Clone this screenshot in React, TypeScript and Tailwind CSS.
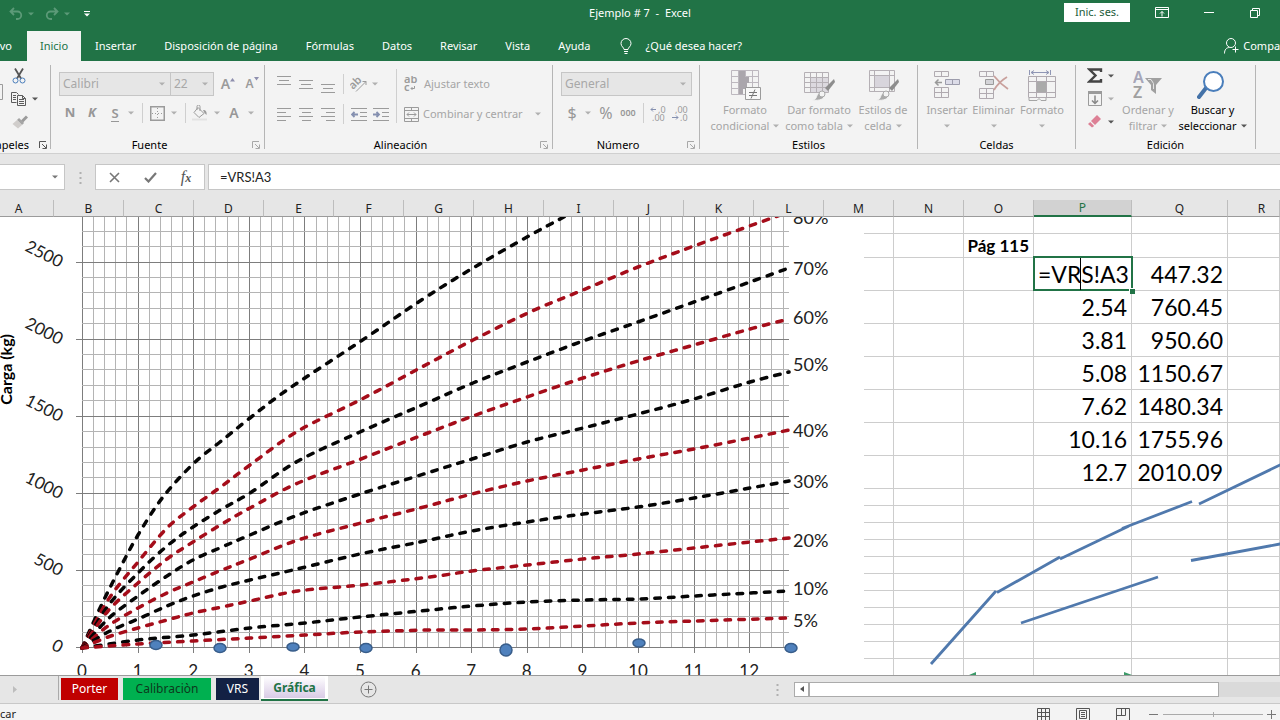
import React from "react";

type Kids = { children?: React.ReactNode };

const Arrow = ({ cls = "text-[#b0b0b0]" }: { cls?: string }) => (
  <svg className={`shrink-0 ${cls}`} width="6" height="4" viewBox="0 0 6 4" aria-hidden="true">
    <path d="M0 .5h6L3 3.5z" fill="currentColor" />
  </svg>
);

const Svg = ({ w, h, cls = "text-[#9b9b9b]", children }: Kids & { w: number; h: number; cls?: string }) => (
  <svg className={`shrink-0 ${cls}`} width={w} height={h} viewBox={`0 0 ${w} ${h}`} fill="none" stroke="currentColor" aria-hidden="true">
    {children}
  </svg>
);

const Btn = ({ w, label, children }: Kids & { w: string; label: string }) => (
  <button type="button" aria-label={label} className={`flex h-full shrink-0 items-center justify-center ${w}`}>
    {children}
  </button>
);

const Rule = () => <div className="h-5 w-px shrink-0 bg-[#cfcfcf]" />;

const Launcher = ({ cls = "text-[#a8a8a8]" }: { cls?: string }) => (
  <button type="button" aria-label="Más opciones" className="flex items-center">
    <Svg w={8} h={8} cls={cls}>
      <path d="M.5 7V.5H7M3 3l4 4M7.500 3.500v4h-4" />
    </Svg>
  </button>
);

function Group({ w, label, launcher, children }: Kids & { w: string; label: string; launcher?: boolean }) {
  return (
    <section aria-label={label} className={`flex shrink-0 ${w}`}>
      <div className="flex min-w-0 flex-1 flex-col">
        <div className="flex flex-1 flex-col">{children}</div>
        <div className="flex h-4 items-center">
          <span className="flex-1 text-center text-black">{label}</span>
          {launcher && <span className="flex w-4 justify-center"><Launcher /></span>}
        </div>
      </div>
      <div className="my-1 w-px bg-[#b5b5b5]" />
    </section>
  );
}

const Big = ({ w, icon, a, b, cls = "text-[#a5a5a5]", arrowCls }: { w: string; icon: React.ReactNode; a: string; b?: string; cls?: string; arrowCls?: string }) => (
  <button type="button" className={`flex shrink-0 flex-col items-center pt-[7px] leading-4 whitespace-nowrap ${w} ${cls}`}>
    <span className="flex h-[34px] items-center">{icon}</span>
    <span>{a}</span>
    <span className="flex h-4 items-center gap-1">
      {b}
      <Arrow cls={arrowCls} />
    </span>
  </button>
);

const lineSets = {
  top: ["M0 .5h14M2 4.500h10M0 8.500h14", 9],
  left: ["M0 .5h14M0 4.500h9M0 8.500h14M0 12.500h9", 13],
  center: ["M0 .5h14M3 4.500h9M0 8.500h14M3 12.500h9", 13],
  right: ["M0 .5h14M5 4.500h9M0 8.500h14M5 12.500h9", 13],
} as const;

const Lines = ({ kind }: { kind: keyof typeof lineSets }) => (
  <Svg w={14} h={lineSets[kind][1]}>
    <path d={lineSets[kind][0]} />
  </Svg>
);

const Brush = () => (
  <>
    <path d="M31 9L22 18l3 3 7-9z" fill="#8d8d8d" stroke="none" />
    <path d="M9 30c5 0 4-4 6-6s6-1 6 2-4 5-12 4z" fill="#a9a9a9" stroke="#f3f3f3" />
    <circle cx="19" cy="24" r="3" fill="#f3f3f3" stroke="#a9a9a9" />
  </>
);

function TitleBar() {
  return (
    <header className="flex h-[31px] shrink-0 items-center bg-[#217346] text-white">
      <div className="flex flex-1 basis-0 items-center self-stretch pb-1">
        <span className="w-1" />
        <Btn w="w-6" label="Deshacer">
          <Svg w={14} h={13} cls="text-[#5c9a78]">
            <path d="M5 1L1.500 4.500 5 8M2 4.500h6.500a3.700 3.700 0 0 1 0 7.500H7" strokeWidth="1.800" />
          </Svg>
        </Btn>
        <Arrow cls="text-[#5c9a78]" />
        <span className="w-1.5" />
        <Btn w="w-6" label="Rehacer">
          <Svg w={14} h={13} cls="text-[#5c9a78]">
            <path d="M9 1l3.500 3.500L9 8M12 4.500H5.500a3.700 3.700 0 0 0 0 7.500H7" strokeWidth="1.800" />
          </Svg>
        </Btn>
        <Arrow cls="text-[#5c9a78]" />
        <span className="w-[7px]" />
        <Btn w="w-5" label="Personalizar barra de acceso rápido">
          <Svg w={6} h={6} cls="text-white">
            <path d="M0 .5h6" />
            <path d="M0 2.500h6L3 5.500z" fill="currentColor" stroke="none" />
          </Svg>
        </Btn>
      </div>
      <h1 className="pb-1 whitespace-pre">Ejemplo # 7  -  Excel</h1>
      <div className="flex flex-1 basis-0 items-center justify-end self-stretch pb-1.5">
        <button type="button" className="mr-1.5 flex h-[19px] w-[66px] items-center justify-center bg-white text-[#1d5c3a]">
          Inic. ses.
        </button>
        <Btn w="w-[52px]" label="Opciones de la cinta">
          <Svg w={14} h={11} cls="text-white">
            <path d="M.5.5h13v10H.5zM.5 2.500h13M7 9.500V4.500M5 6.500l2-2 2 2" />
          </Svg>
        </Btn>
        <Btn w="w-[42px]" label="Minimizar">
          <Svg w={10} h={1} cls="text-white"><path d="M0 .5h10" /></Svg>
        </Btn>
        <Btn w="w-[50px]" label="Restaurar">
          <Svg w={10} h={10} cls="text-white"><path d="M.5 2.500h7v7h-7zM2.500 2V.5h7v7H8" /></Svg>
        </Btn>
      </div>
    </header>
  );
}

const menu = ["Insertar", "Disposición de página", "Fórmulas", "Datos", "Revisar", "Vista", "Ayuda"];

function Tabs() {
  return (
    <nav className="flex h-[30px] shrink-0 items-stretch overflow-hidden bg-[#217346] whitespace-nowrap text-white">
      <a href="#archivo" className="flex w-[27px] items-center justify-end pr-[15px]">Archivo</a>
      <a href="#inicio" className="flex w-[54px] items-center justify-center bg-[#f3f3f3] text-[#217346]">Inicio</a>
      <div className="flex items-center gap-7 pl-3.5">
        {menu.map((m) => <a key={m} href={`#${m}`}>{m}</a>)}
      </div>
      <button type="button" className="flex items-center gap-3.5 pl-[29px]">
        <Svg w={12} h={16} cls="text-white">
          <path d="M4 11.500c0-2-3-3-3-6a5 5 0 0 1 10 0c0 3-3 4-3 6zM4 13.500h4M4.500 15.500h3" />
        </Svg>
        ¿Qué desea hacer?
      </button>
      <button type="button" className="-mr-4 ml-auto flex items-center gap-1">
        <Svg w={15} h={16} cls="text-white">
          <circle cx="7" cy="5" r="4.500" />
          <path d="M.5 15.500c0-4 2-6 5-6M11.500 8.500v6M8.500 11.500h6" />
        </Svg>
        Compartir
      </button>
    </nav>
  );
}

const Combo = ({ w, value, label }: { w: string; value: string; label: string }) => (
  <div className={`relative flex h-6 shrink-0 items-center text-[12px] ${w}`}>
    <select aria-label={label} disabled defaultValue={value} className="h-full w-full appearance-none border border-[#c6c6c6] bg-[#e6e6e6] pl-[3px] text-[#a8a8a8] opacity-100">
      <option>{value}</option>
    </select>
    <span className="pointer-events-none absolute right-1.5"><Arrow /></span>
  </div>
);

function Ribbon() {
  return (
    <div className="flex h-[93px] shrink-0 overflow-hidden border-b border-[#d0d0d0] bg-[#f3f3f3]">
      <section aria-label="Portapapeles" className="flex w-[51px] shrink-0">
        <div className="flex min-w-0 flex-1 flex-col overflow-hidden pt-[3px]">
          <div className="flex flex-1">
            <div className="w-2 shrink-0 overflow-hidden pt-5">
              <Svg w={3} h={16}><path d="M0 .5h2.500v15H0" /></Svg>
            </div>
            <div className="flex flex-col">
              <div className="flex h-[23px]">
                <Btn w="w-[21px]" label="Cortar">
                  <Svg w={14} h={16} cls="text-[#555]">
                    <path d="M3 .5l6 10M11 .5L5 10.500" strokeWidth="1.800" />
                    <circle cx="3.500" cy="12.500" r="2.500" stroke="#4a7ebb" />
                    <circle cx="10.500" cy="12.500" r="2.500" stroke="#4a7ebb" />
                  </Svg>
                </Btn>
              </div>
              <div className="flex h-[23px] items-center">
                <Btn w="w-[21px]" label="Copiar">
                  <Svg w={15} h={14} cls="text-[#5c5c5c]">
                    <path d="M5.500 10.500h-5V.5h5l2 2M2 3.500h3M2 5.500h3M2 7.500h3" />
                    <path d="M6.500 3.500h5l3 3v7h-8zM8 7.500h5M8 9.500h5M8 11.500h5M11.500 3.500v3h3" fill="#f3f3f3" />
                  </Svg>
                </Btn>
                <span className="w-[3px]" />
                <Arrow cls="text-[#555]" />
              </div>
              <div className="flex h-[23px]">
                <Btn w="w-[23px]" label="Copiar formato">
                  <Svg w={16} h={14}>
                    <path d="M15 1.500L10 6.500" strokeWidth="3" />
                    <path d="M6 4l5 5" strokeWidth="3" stroke="#a5a5a5" />
                    <path d="M5 5l5 5-4 3.500L.5 9z" fill="#d0cdcb" stroke="none" />
                  </Svg>
                </Btn>
              </div>
            </div>
          </div>
          <div className="flex h-4 items-center justify-end gap-[10px] pr-[3px]">
            <span className="text-black">Portapapeles</span>
            <Launcher cls="text-[#555]" />
          </div>
        </div>
        <div className="my-1 w-px bg-[#b5b5b5]" />
      </section>

      <Group w="w-[214px]" label="Fuente" launcher>
        <div className="flex items-center pt-[11px] pl-2">
          <Combo w="w-28" value="Calibri" label="Fuente" />
          <Combo w="-ml-px w-11" value="22" label="Tamaño de fuente" />
          <button type="button" aria-label="Aumentar tamaño" className="flex w-6 justify-center pl-1 text-sm font-semibold text-[#9b9b9b]">
            A<Svg w={5} h={8}><path d="M0 7.500h5L2.500 4z" fill="#8e8fae" stroke="none" /></Svg>
          </button>
          <button type="button" aria-label="Reducir tamaño" className="flex w-6 justify-center pl-1 text-[12px] font-semibold text-[#9b9b9b]">
            A<Svg w={5} h={8}><path d="M0 2h5L2.500 5.500z" fill="#8e8fae" stroke="none" /></Svg>
          </button>
        </div>
        <div className="flex h-[30px] items-center pt-1 pl-2 text-[13px] font-bold text-[#979797]">
          <Btn w="w-[22px]" label="Negrita">N</Btn>
          <Btn w="w-[22px]" label="Cursiva"><i>K</i></Btn>
          <Btn w="w-6" label="Subrayado"><span className="border-b border-[#979797] leading-4 font-semibold">S</span></Btn>
          <Btn w="w-2" label="Opciones de subrayado"><Arrow /></Btn>
          <span className="w-[7px]" />
          <Rule />
          <Btn w="w-7" label="Bordes">
            <Svg w={15} h={15}><path d="M.5.5h14v14H.5z" strokeWidth="2" /><path d="M7.500 2v12M2 7.500h12" strokeDasharray="1 2" /></Svg>
          </Btn>
          <Arrow />
          <span className="w-2" />
          <Rule />
          <Btn w="w-7" label="Color de relleno">
            <Svg w={16} h={16}>
              <path d="M6 2.500l6 6-5 4-5-5zM5 5V1.500a1.500 1.500 0 0 1 3 0V6" />
              <path d="M11 5c3 0 4 2 3.500 5l-2-2z" fill="#9b9b9b" stroke="none" />
              <path d="M0 14.500h15" stroke="#e2e2e2" strokeWidth="2" />
            </Svg>
          </Btn>
          <Arrow />
          <Btn w="w-7" label="Color de fuente"><span className="text-sm font-semibold">A</span></Btn>
          <Arrow />
        </div>
      </Group>

      <Group w="w-72" label="Alineación" launcher>
        <div className="flex pt-2 pl-2">
          <div className="flex flex-col">
            <div className="flex h-[30px] items-center">
              <Btn w="w-[22px]" label="Arriba"><span className="pb-2"><Lines kind="top" /></span></Btn>
              <Btn w="w-[22px]" label="Medio"><Lines kind="top" /></Btn>
              <Btn w="w-[22px]" label="Abajo"><span className="pt-2"><Lines kind="top" /></span></Btn>
              <span className="w-1" />
              <Rule />
              <Btn w="w-7" label="Orientación">
                <Svg w={17} h={16}>
                  <text x="0" y="11" fontSize="11" fontWeight="600" fill="currentColor" stroke="none" transform="rotate(-45 5 9)">ab</text>
                  <path d="M6 15.500L16 5.500M12.500 5.500H16v3.500" />
                </Svg>
              </Btn>
              <Arrow />
            </div>
            <div className="flex h-[30px] items-center">
              <Btn w="w-[22px]" label="Izquierda"><Lines kind="left" /></Btn>
              <Btn w="w-[22px]" label="Centro"><Lines kind="center" /></Btn>
              <Btn w="w-[22px]" label="Derecha"><Lines kind="right" /></Btn>
              <span className="w-1" />
              <Rule />
              <Btn w="w-[30px]" label="Disminuir sangría">
                <Svg w={16} h={13}><path d="M0 .5h16M9 4.500h7M9 8.500h7M0 12.500h16" /><path d="M7 6.500H1M3.500 4L1 6.500 3.500 9" stroke="#8590b0" strokeWidth="1.800" /></Svg>
              </Btn>
              <Btn w="w-3.5" label="Aumentar sangría">
                <Svg w={16} h={13}><path d="M0 .5h16M9 4.500h7M9 8.500h7M0 12.500h16" /><path d="M0 6.500h6M3.500 4L6 6.500 3.500 9" stroke="#8590b0" strokeWidth="1.800" /></Svg>
              </Btn>
            </div>
          </div>
          <div className="ml-2 h-[54px] w-px bg-[#cfcfcf]" />
          <div className="flex flex-col pl-[7px] text-[#a5a5a5]">
            <button type="button" className="flex h-[30px] items-center gap-1.5 whitespace-nowrap">
              <Svg w={14} h={16}>
                <text x="0" y="7" fontSize="11" fontWeight="600" fill="currentColor" stroke="none">ab</text>
                <text x="0" y="15" fontSize="11" fontWeight="600" fill="currentColor" stroke="none">c</text>
                <path d="M10.500 10v2.500H7M8.500 11L7 12.500 8.500 14" />
              </Svg>
              Ajustar texto
            </button>
            <button type="button" className="flex h-[30px] items-center gap-1 whitespace-nowrap">
              <Svg w={15} h={15}>
                <path d="M.5.5h14v14H.5zM.5 3.500h14M.5 11.500h14M7.500.5v3M7.500 11.500v3M3 7.500h9M5 5.500l-2 2 2 2M10 5.500l2 2-2 2" />
              </Svg>
              Combinar y centrar
              <span className="w-1" />
              <Arrow />
            </button>
          </div>
        </div>
      </Group>

      <Group w="w-[147px]" label="Número" launcher>
        <div className="flex pt-[11px] pl-2">
          <Combo w="w-[131px]" value="General" label="Formato de número" />
        </div>
        <div className="flex h-[30px] items-center pt-1 pl-1.5 text-[#979797]">
          <Btn w="w-[26px]" label="Moneda"><span className="text-base">$</span></Btn>
          <Arrow />
          <Btn w="w-[30px]" label="Porcentaje"><span className="text-base">%</span></Btn>
          <Btn w="w-3.5" label="Millares"><span className="text-[9px] font-semibold">000</span></Btn>
          <span className="w-2" />
          <Rule />
          <Btn w="w-7" label="Aumentar decimales">
            <Svg w={16} h={15}>
              <path d="M6 3.500H1M3 1.500l-2 2 2 2" stroke="#8590b0" />
              <text x="8" y="7" fontSize="9" fill="currentColor" stroke="none">,0</text>
              <text x="2" y="15" fontSize="9" fill="currentColor" stroke="none">,00</text>
            </Svg>
          </Btn>
          <Btn w="w-4" label="Disminuir decimales">
            <Svg w={16} h={15}>
              <path d="M0 11.500h6M4 9.500l2 2-2 2" stroke="#8590b0" />
              <text x="3" y="7" fontSize="9" fill="currentColor" stroke="none">,00</text>
              <text x="8" y="15" fontSize="9" fill="currentColor" stroke="none">,0</text>
            </Svg>
          </Btn>
        </div>
      </Group>

      <Group w="w-[218px]" label="Estilos">
        <div className="flex pl-2">
          <Big w="w-[74px]" a="Formato" b="condicional" icon={
            <Svg w={32} h={31}>
              <path d="M2.500.5h27v24h-27zM2.500 6.500h27M2.500 12.500h27M2.500 18.500h27M9.500.5v24M16.500.5v24M23.500.5v24" stroke="#bdb8bf" />
              <path d="M10 1h6v6h-6zM10 7h10v6H10zM10 13h8v6h-8zM10 19h4v5h-4z" fill="#aaa6ac" stroke="none" />
              <path d="M16.500 17.500h15v12h-15z" fill="#f8f8f8" />
              <path d="M20 22.500h8M20 25.500h8M26 19.500l-4 9" stroke="#777" />
            </Svg>
          } />
          <Big w="w-[74px]" a="Dar formato" b="como tabla" icon={
            <Svg w={32} h={31}>
              <path d="M8 8h17v14H8z" fill="#dcd9df" stroke="none" />
              <path d="M1.500 2.500h24v20h-24zM1.500 7.500h24M1.500 12.500h24M1.500 17.500h24M7.500 2.500v20M13.500 2.500v20M19.500 2.500v20" stroke="#b5b0b5" />
              <Brush />
            </Svg>
          } />
          <Big w="w-[54px]" a="Estilos de" b="celda" icon={
            <Svg w={32} h={31}>
              <path d="M7 6h15v11H7z" fill="#d8d5dc" stroke="none" />
              <path d="M2.500.5h25v21h-25zM2.500 5.500h25M2.500 17.500h25M7.500.5v21M22.500.5v21" stroke="#b5b0b5" />
              <Brush />
            </Svg>
          } />
        </div>
      </Group>

      <Group w="w-[158px]" label="Celdas">
        <div className="flex pl-1.5">
          <Big w="w-[46px]" a="Insertar" icon={
            <Svg w={27} h={28}>
              <path d="M.5.5h14v5H.5zM7.500.5v5M.5 16.500h14v10H.5zM.5 21.500h14M7.500 16.500v10" stroke="#b0aab0" />
              <path d="M11.500 8.500h14v5h-14zM18.500 8.500v5" fill="#dcdce8" stroke="#9c9cac" />
              <path d="M8 11.500H2M4.500 8.500l-3 3 3 3" stroke="#999" strokeWidth="1.500" />
            </Svg>
          } />
          <Big w="w-[47px]" a="Eliminar" icon={
            <Svg w={30} h={28}>
              <path d="M.5.500h14v5H.5zM7.500.5v5M.5 17.500h14v10H.5zM.5 22.500h14M7.500 17.500v10" stroke="#b0aab0" />
              <path d="M6.500 8.500h8v5h-8z" fill="#d4d4d8" stroke="#9a9a9a" />
              <path d="M15 5c4 5 8 9 14 13M28 6c-5 3-10 8-13 13" stroke="#c9a09c" strokeWidth="1.800" />
            </Svg>
          } />
          <Big w="w-[50px]" a="Formato" icon={
            <Svg w={28} h={31}>
              <path d="M1.500 0v5M22.500 0v5M3 2.500h18M6 .5l-3 2 3 2M18 .5l3 2-3 2" stroke="#9097b5" />
              <path d="M.5 6.500h27v21H.5zM.5 11.500h27M.5 22.500h27M8.500 6.500v21M18.500 6.500v21" stroke="#b0aab0" />
              <path d="M9 12h9v10H9z" fill="#aaa" stroke="none" />
              <path d="M1 28v2.500h8l2-2 2 2h5V28" stroke="#a5a5a5" />
            </Svg>
          } />
        </div>
      </Group>

      <Group w="w-[180px]" label="Edición">
        <div className="flex pl-1.5">
          <div className="flex w-9 flex-col pt-[3px]">
            <div className="flex h-[23px] items-center">
              <Btn w="w-[26px]" label="Autosuma">
                <Svg w={16} h={15} cls="text-[#444]"><path d="M14 4V1.500H2.500L8.500 7.500l-6 6H14v-2.500" strokeWidth="2.400" /></Svg>
              </Btn>
              <Arrow cls="text-[#555]" />
            </div>
            <div className="flex h-[23px] items-center">
              <Btn w="w-[26px]" label="Rellenar">
                <Svg w={14} h={15}><path d="M.5.5h13v14H.5z" /><path d="M0 1.500h14" strokeWidth="3" /><path d="M7 4.500v8M4 9.500l3 3 3-3" stroke="#888" strokeWidth="1.500" /></Svg>
              </Btn>
              <Arrow />
            </div>
            <div className="flex h-[23px] items-center">
              <Btn w="w-[26px]" label="Borrar">
                <Svg w={14} h={13}>
                  <path d="M9 0l4 4-6 6-4-4z" fill="#dd8095" stroke="none" />
                  <path d="M2.200 7l4 4L4 12.500 0 9z" fill="#dd8095" stroke="none" />
                </Svg>
              </Btn>
              <Arrow cls="text-[#555]" />
            </div>
          </div>
          <Big w="w-[60px]" a="Ordenar y" b="filtrar" icon={
            <Svg w={30} h={30}>
              <text x="0" y="13" fontSize="16" fontWeight="600" fill="#a7a6b8" stroke="none">A</text>
              <text x="0" y="28" fontSize="16" fontWeight="600" fill="#a0a0a0" stroke="none">Z</text>
              <path d="M12 8h17l-6 7v9l-5-4v-5z" fill="#a0a0a0" stroke="none" />
              <path d="M15 9.500h3l2.500 4V19" stroke="#e6e6e6" />
            </Svg>
          } />
          <Big w="w-[69px]" a="Buscar y" b="seleccionar" cls="text-black" arrowCls="text-[#555]" icon={
            <Svg w={31} h={29}>
              <path d="M9 17L2 26" stroke="#4472a8" strokeWidth="4" strokeLinecap="round" />
              <circle cx="16.500" cy="10.500" r="9.500" fill="#fff" stroke="#4a7ebb" strokeWidth="2" />
            </Svg>
          } />
        </div>
      </Group>
    </div>
  );
}

const Dots = () => (
  <Svg w={3} h={13}><path d="M1.500 1v2M1.500 6v2M1.500 11v2" strokeWidth="2" stroke="#b0b0b0" /></Svg>
);

function FormulaBar() {
  return (
    <div className="flex shrink-0 items-stretch bg-[#e6e6e6] py-[10px]">
      <button type="button" aria-label="Cuadro de nombres" className="flex h-[26px] w-[65px] items-center justify-end border border-l-0 border-[#c6c6c6] bg-white pr-1.5">
        <Arrow cls="text-[#777]" />
      </button>
      <span className="flex w-[30px] items-center justify-center"><Dots /></span>
      <div className="flex w-[110px] border border-[#c6c6c6] bg-white">
        <Btn w="w-9" label="Cancelar"><Svg w={11} h={11} cls="text-[#777]"><path d="M1 1l9 9M10 1l-9 9" strokeWidth="1.600" /></Svg></Btn>
        <Btn w="w-9" label="Introducir"><Svg w={13} h={11} cls="text-[#777]"><path d="M1 6l3.500 3.500L12 1" strokeWidth="2.200" /></Svg></Btn>
        <Btn w="w-9" label="Insertar función"><span className="font-['Liberation_Serif',serif] text-base leading-4 text-[#555] italic">f<span className="text-xs font-bold">x</span></span></Btn>
      </div>
      <input aria-label="Barra de fórmulas" defaultValue="=VRS!A3" className="ml-[3px] min-w-0 flex-1 border border-r-0 border-[#c6c6c6] bg-white pt-px pl-[11px] font-[Lato,sans-serif] text-[13px] text-[#222] outline-none" />
    </div>
  );
}

const R = "#a50d1a";
const K = "#050505";
const curves: { c: string; p: string }[] = [
  { c: K, p: "82,648 100,608 118,572 138,535 163,497 193,464 220,442 250,418 287,390 361,341 423,299 473,268 527,237 562,218 590,203" },
  { c: R, p: "82,648 108,600 138,562 167,528 193,507 222,486 250,465 298,431 360,400 420,368 473,340 530,312 583,290 638,267 694,246 772,218 789,212" },
  { c: K, p: "82,648 108,606 138,573 167,546 193,527 222,509 250,493 298,461 360,432 420,406 473,383 527,362 583,341 638,322 694,302 750,282 789,268" },
  { c: R, p: "82,648 108,611 138,583 167,559 193,542 222,524 250,508 298,483 361,459 420,436 473,416 527,397 583,378 638,361 694,345 750,329 789,319" },
  { c: K, p: "82,648 108,619 138,596 167,576 193,560 222,547 250,535 298,515 360,494 427,473 472,459 527,442 583,428 638,414 694,399 750,382 789,372" },
  { c: R, p: "82,648 108,626 138,608 167,593 193,582 222,570 250,559 298,540 361,523 420,508 472,494 527,481 583,470 638,459 694,449 750,438 789,430" },
  { c: K, p: "82,648 108,632 138,619 167,606 193,596 222,587 250,580 293,570 360,554 420,542 472,531 527,522 583,514 638,507 694,498 750,488 789,481" },
  { c: R, p: "82,648 108,637 138,628 167,620 193,613 222,607 250,601 298,591 361,585 430,577 472,571 527,565 583,559 638,554 694,548 750,542 789,538" },
  { c: K, p: "82,648 138,640 193,635 250,628 305,623 360,617 430,610 472,606 527,602 583,600 638,599 694,596 750,593 789,591" },
  { c: R, p: "82,648 138,644 193,641 250,638 305,635 361,632 430,630 472,630 527,629 583,626 638,623 694,621 789,618" },
];

// Turns a list of points into a smooth Catmull-Rom spline path.
function spline(list: string) {
  const p = list.split(" ").map((s) => s.split(",").map(Number));
  let d = `M${p[0][0]} ${p[0][1]}`;
  for (let i = 0; i < p.length - 1; i++) {
    const a = p[i - 1] ?? p[i];
    const b = p[i];
    const c = p[i + 1];
    const e = p[i + 2] ?? c;
    d += `C${b[0] + (c[0] - a[0]) / 6} ${b[1] + (c[1] - a[1]) / 6} ${c[0] - (e[0] - b[0]) / 6} ${c[1] - (e[1] - b[1]) / 6} ${c[0]} ${c[1]}`;
  }
  return d;
}

const percents: [string, number][] = [
  ["80%", 224], ["70%", 275], ["60%", 324], ["50%", 371], ["40%", 437], ["30%", 488], ["20%", 547], ["10%", 595], ["5%", 627],
];
const dots: number[][] = [
  [156, 645, 4.5], [220, 648, 4.5], [293, 647, 4], [366, 648, 4.5], [506, 650, 6], [639, 643, 4], [791, 648, 4.5],
];
const range = (n: number) => Array.from({ length: n }, (_, i) => i);

function Chart() {
  return (
    <svg className="absolute top-[17px] left-0 bg-white" width="864" height="458" viewBox="0 217 864 458" fontFamily="Lato, sans-serif" role="img" aria-label="Carga (kg)">
      {range(64).map((i) => {
        const x = Math.round(82 + i * 11.12) + 0.5;
        const major = i % 5 === 0;
        return <path key={i} d={`M${x} 217V${major ? 653 : 648}`} stroke={major ? "#7d7d7d" : "#b4b4b4"} />;
      })}
      {range(28).map((i) => {
        const y = Math.round(647 - i * 15.42) + 0.5;
        const major = i % 5 === 0;
        return <path key={i} d={`M${major ? 76 : 82} ${y}H789`} stroke={major ? "#7d7d7d" : "#b4b4b4"} />;
      })}
      {curves.map((l, i) => (
        <path key={i} d={spline(l.p)} fill="none" stroke={l.c} strokeWidth="3.500" strokeLinecap="round" strokeDasharray="5.500 8.200" />
      ))}
      {dots.map(([x, y, r]) => (
        <ellipse key={x} cx={x} cy={y} rx="6" ry={r} fill="#4f81bd" stroke="#385d8a" strokeWidth="1.500" />
      ))}
      {percents.map(([t, y]) => <text key={t} x="793" y={y} fontSize="18" fill="#222">{t}</text>)}
      {range(13).map((i) => <text key={i} x={82 + i * 55.6} y="677" fontSize="17" textAnchor="middle" fill="#222">{i}</text>)}
      {range(6).map((i) => {
        const y = 654 - i * 77.1;
        return <text key={i} x="61" y={y} fontSize="17" textAnchor="end" fill="#222" transform={`rotate(27 61 ${y - 4})`}>{i * 500}</text>;
      })}
      <text x="12" y="334" fontSize="16" fontWeight="700" textAnchor="end" transform="rotate(-90 12 334)">Carga (kg)</text>
    </svg>
  );
}

const cols = ["A", "B", "C", "D", "E", "F", "G", "H", "I", "J", "K", "L", "M", "N", "O", "P", "Q", "R"];
const colW: Record<string, string> = { A: "w-[54px]", P: "w-[98px]", Q: "w-24", R: "" };
const data = [
  ["=VRS!A3", "447.32"], ["2.54", "760.45"], ["3.81", "950.60"], ["5.08", "1150.67"],
  ["7.62", "1480.34"], ["10.16", "1755.96"], ["12.7", "2010.09"],
];

function Row({ h, cells = {} }: { h: string; cells?: Record<string, React.ReactNode> }) {
  return (
    <tr className={h}>
      {cols.map((c) => (
        <td key={c} className="border-r border-b border-[#cdcdcd] p-0 text-right whitespace-nowrap">{cells[c]}</td>
      ))}
    </tr>
  );
}

function Sheet() {
  return (
    <main className="relative min-h-[475px] flex-1 shrink-0 overflow-hidden bg-white font-[Lato,sans-serif] text-black">
      <table className="w-full table-fixed border-separate border-spacing-0">
        <colgroup>
          {cols.map((c) => <col key={c} className={colW[c] ?? "w-[70px]"} />)}
        </colgroup>
        <thead>
          <tr className="h-[17px]">
            {cols.map((c) => (
              <th key={c} scope="col" className={`border-r border-b border-r-[#bdbdbd] p-0 font-['Noto_Sans',sans-serif] text-[12px] leading-[15px] font-normal ${c === "P" ? "border-b-2 border-b-[#217346] bg-[#d2d2d2] text-[#217346]" : "border-b-[#9b9b9b] bg-[#e6e6e6] text-[#222]"} ${c === "A" ? "pr-4" : ""} ${c === "R" ? "pl-4" : ""}`}>
                {c}
              </th>
            ))}
          </tr>
        </thead>
        <tbody>
          <Row h="h-[17px]" />
          <Row h="h-6" cells={{ O: <div className="pr-1 text-[17px] leading-[23px] font-bold">Pág 115</div> }} />
          {data.map(([p, q], i) => (
            <Row
              key={q}
              h="h-[33px]"
              cells={{
                P: i === 0 ? (
                  <div className="relative h-8">
                    <input aria-label="Celda P3" defaultValue={p} className="absolute -top-0.5 -left-px h-[35px] w-[100px] border-2 border-[#217346] bg-white px-[3px] text-right text-[23px] outline-none" />
                    <span className="absolute top-0 left-[46px] h-8 w-px bg-black" />
                    <span className="absolute -right-1 -bottom-1 size-[6px] border-t border-l border-white bg-[#217346]" />
                  </div>
                ) : <div className="pr-1 text-[23px] leading-8">{p}</div>,
                Q: <div className="pr-1 text-[23px] leading-8">{q}</div>,
              }}
            />
          ))}
          {range(11).map((i) => <Row key={i} h="h-[17px]" />)}
        </tbody>
      </table>
      <Chart />
      <svg className="absolute top-[17px] left-[864px]" width="600" height="458" viewBox="864 217 600 458" fill="none" stroke="#5079ad" strokeWidth="2.800" aria-hidden="true">
        <path d="M931 664L996 591M997 592.500L1060 557M1060 559L1129 526M1122 528.500L1192 501.500M1199 504L1280 465L1360 427M1021 623L1158 577M1191 560.500L1280 544L1360 529" />
        <path d="M969 675l7-3v3zM1124 672l8 3h-8z" fill="#3a9a68" stroke="none" />
      </svg>
    </main>
  );
}

function SheetTabs() {
  return (
    <div className="flex h-7 shrink-0 items-start border-t border-[#9b9b9b] bg-[#e6e6e6] text-[12px]">
      <span className="flex h-[26px] w-[58px] items-center pl-[13px]">
        <Svg w={4} h={7}><path d="M0 0l4 3.500L0 7z" fill="#bdbdbd" stroke="none" /></Svg>
      </span>
      <div className="flex h-6 gap-[5px] border-l border-[#aaa] pt-0.5 pl-0.5">
        <button type="button" className="h-[22px] w-[57px] bg-[#c00000] text-white">Porter</button>
        <button type="button" className="h-[22px] w-[88px] bg-[#00b050] text-[#0d3a1d]">Calibraciòn</button>
        <button type="button" className="h-[22px] w-[43px] bg-[#132144] text-white">VRS</button>
      </div>
      <div className="ml-0.5 h-[25px] w-[67px] border-b-2 border-[#217346] bg-white px-[3px] pb-px">
        <button type="button" className="flex h-[22px] w-full items-center justify-center bg-linear-to-b from-white to-[#d9cbe6] pt-0.5 font-bold text-[#217346]">Gráfica</button>
      </div>
      <button type="button" aria-label="Hoja nueva" className="ml-8 flex h-[26px] items-center">
        <Svg w={17} h={17} cls="text-[#777]"><circle cx="8.500" cy="8.500" r="7.500" /><path d="M8.500 4.500v8M4.500 8.500h8" /></Svg>
      </button>
      <div className="ml-auto flex h-[26px] w-[504px] items-center">
        <Dots />
        <button type="button" aria-label="Desplazar a la izquierda" className="ml-[15px] flex h-[15px] w-[15px] shrink-0 items-center justify-center border border-[#ababab] bg-white">
          <Svg w={4} h={6}><path d="M4 0v6L0 3z" fill="#555" stroke="none" /></Svg>
        </button>
        <div className="h-[15px] flex-1 border border-[#ababab] bg-white" />
        <div className="h-[15px] w-[61px] bg-[#dadada]" />
      </div>
    </div>
  );
}

function StatusBar() {
  return (
    <footer className="flex h-[22px] shrink-0 items-center overflow-hidden border-t border-[#c8c8c8] bg-[#f3f3f3] text-[#222]">
      <span className="flex w-4 justify-end">Modificar</span>
      <div className="ml-auto flex h-full items-center">
        <Btn w="w-10" label="Normal"><Svg w={13} h={13} cls="text-[#555]"><path d="M.5.5h12v12H.5zM.5 4.500h12M.5 8.500h12M4.500.5v12M8.500.5v12" /></Svg></Btn>
        <Btn w="w-10" label="Diseño de página"><Svg w={14} h={13} cls="text-[#555]"><path d="M.5.5h13v12H.5zM3.500 2.500h7v8h-7zM5 4.500h4M5 6.500h4M5 8.500h4" /></Svg></Btn>
        <Btn w="w-10" label="Vista previa de salto de página"><Svg w={14} h={13} cls="text-[#555]"><path d="M.5.5h13v12H.5zM5.500.5v7M9.500.5v7M.5 7.500h9" /></Svg></Btn>
        <Btn w="w-5" label="Alejar"><Svg w={9} h={9} cls="text-[#777]"><path d="M0 4.500h9" /></Svg></Btn>
        <Svg w={100} h={9} cls="text-[#aaa]"><path d="M0 4.500h100M50.500 2v5" /></Svg>
        <Btn w="w-[17px]" label="Acercar"><Svg w={9} h={9} cls="text-[#777]"><path d="M0 4.500h9M4.500 0v9" /></Svg></Btn>
      </div>
    </footer>
  );
}

export default function App() {
  return (
    <div className="flex h-screen flex-col overflow-hidden bg-[#e6e6e6] font-['Noto_Sans',sans-serif] text-[11px]">
      <TitleBar />
      <Tabs />
      <Ribbon />
      <FormulaBar />
      <Sheet />
      <SheetTabs />
      <StatusBar />
    </div>
  );
}
